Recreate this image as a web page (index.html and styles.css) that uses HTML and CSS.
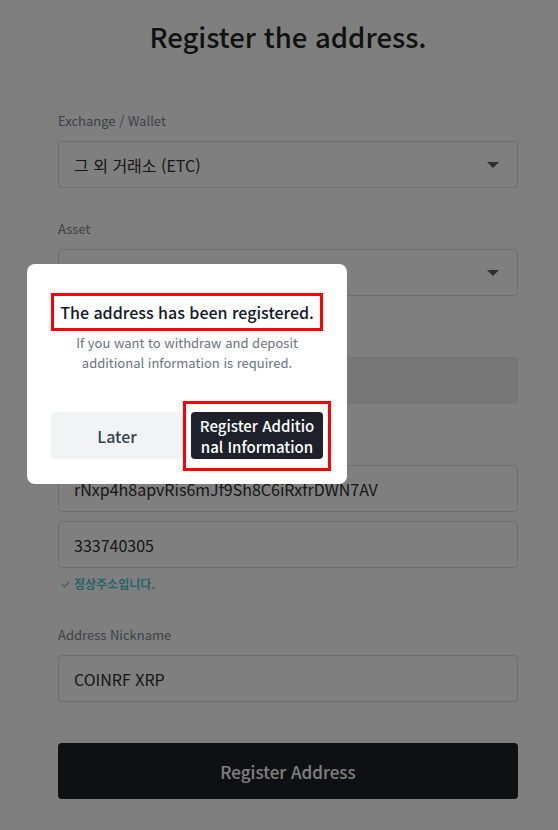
FILE: index.html
```html
<!DOCTYPE html>
<html lang="ko">
<head>
<meta charset="utf-8">
<title>Register the address.</title>
<link rel="stylesheet" href="styles.css">
</head>
<body>
<main class="page">
  <h1 class="title">Register the address.</h1>

  <div class="group">
    <div class="label">Exchange / Wallet</div>
    <div class="field select">
      <span>그 외 거래소 (ETC)</span>
      <span class="caret"></span>
    </div>
  </div>

  <div class="group">
    <div class="label">Asset</div>
    <div class="field select">
      <span></span>
      <span class="caret"></span>
    </div>
  </div>

  <div class="group">
    <div class="label"></div>
    <div class="field disabled"></div>
  </div>

  <div class="group">
    <div class="label"></div>
    <div class="field">rNxp4h8apvRis6mJf9Sh8C6iRxfrDWN7AV</div>
    <div class="field second">333740305</div>
    <div class="valid">
      <svg class="check" width="9" height="7" viewBox="0 0 9 7"><path d="M0.8 3.4 L3.3 5.8 L8.2 0.8" fill="none" stroke="currentColor" stroke-width="1.2"/></svg>
      <span>정상주소입니다.</span>
    </div>
  </div>

  <div class="group">
    <div class="label">Address Nickname</div>
    <div class="field">COINRF XRP</div>
  </div>

  <button class="submit">Register Address</button>
</main>

<div class="overlay">
  <div class="modal">
    <div class="modal-title">The address has been registered.</div>
    <p class="modal-text">If you want to withdraw and deposit<br>additional information is required.</p>
    <div class="actions">
      <button class="btn later">Later</button>
      <div class="btn-wrap">
        <button class="btn primary">Register Additional Information</button>
        <span class="mark"></span>
      </div>
    </div>
  </div>
</div>
</body>
</html>
```

FILE: styles.css
```css
* { box-sizing: border-box; }

html, body {
  margin: 0;
  padding: 0;
  background: #ffffff;
}

body {
  font-family: "Noto Sans CJK KR", "Noto Sans", sans-serif;
  color: #333;
}

.page {
  width: 460px;
  margin-left: 58px;
  padding-top: 15px;
}

.title {
  margin: 0 0 54px;
  text-align: center;
  font-size: 27.5px;
  font-weight: 500;
  line-height: 42px;
  color: #222;
}

.group {
  margin-bottom: 31px;
}

.label {
  height: 19px;
  font-size: 13px;
  line-height: 19px;
  color: #7d838d;
  margin-bottom: 11px;
}

.field {
  height: 47px;
  border: 1px solid #dcdcdc;
  border-radius: 4px;
  padding: 0 15px;
  display: flex;
  align-items: center;
  justify-content: space-between;
  font-size: 16px;
  color: #2e2e2e;
}

.field.disabled {
  background: #eeeeee;
  border-color: #e6e6e6;
}

.field.second {
  margin-top: 9px;
}

.caret {
  width: 0;
  height: 0;
  border-left: 6.5px solid transparent;
  border-right: 6.5px solid transparent;
  border-top: 6px solid #5a5d64;
  margin-right: 3px;
}

.valid {
  margin-top: 7px;
  display: flex;
  align-items: center;
  gap: 4px;
  font-size: 12px;
  line-height: 17px;
  font-weight: 700;
  color: #52c8d2;
  padding-left: 3px;
}

.check {
  margin-top: 2px;
}

.group:has(.valid) {
  margin-bottom: 33px;
}

.submit {
  display: block;
  width: 100%;
  height: 56px;
  margin-top: 41px;
  border: 0;
  border-radius: 4px;
  background: #1e2028;
  color: #ffffff;
  font-family: inherit;
  font-size: 17px;
  font-weight: 500;
}

.overlay {
  position: fixed;
  inset: 0;
  background: rgba(0, 0, 0, 0.5);
}

.modal {
  position: absolute;
  left: 27px;
  top: 264px;
  width: 320px;
  background: #ffffff;
  border-radius: 8px;
  padding: 29px 24px 25px;
}

.modal-title {
  border: 3px solid #ff0000;
  text-align: center;
  font-size: 16px;
  line-height: 32px;
  font-weight: 500;
  color: #111827;
  white-space: nowrap;
}

.modal-text {
  margin: 2px 0 39px;
  text-align: center;
  font-size: 13px;
  line-height: 20px;
  color: #6b7280;
}

.actions {
  display: grid;
  grid-template-columns: 1fr 1fr;
  gap: 8px;
}

.btn {
  display: block;
  height: 47px;
  border: 0;
  border-radius: 4px;
  font-family: inherit;
  font-size: 16px;
  font-weight: 500;
  width: 100%;
}

.later {
  background: #f2f3f5;
  color: #374151;
}

.btn-wrap {
  position: relative;
}

.primary {
  background: #1e2129;
  color: #ffffff;
  font-size: 15px;
  line-height: 21px;
  padding: 0 8px;
  word-break: break-all;
}

.mark {
  position: absolute;
  left: -8px;
  right: -8px;
  top: -11px;
  bottom: -12px;
  border: 3px solid #ff0000;
  pointer-events: none;
}
```
